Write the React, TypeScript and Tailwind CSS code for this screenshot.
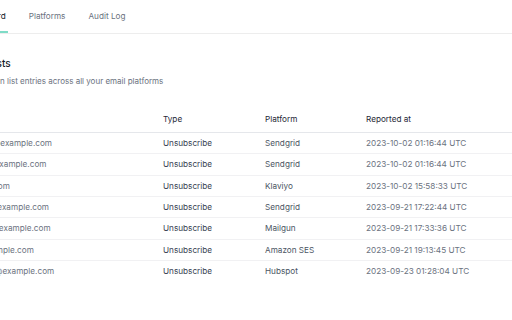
import React from "react";

const rows = [
  { email: "christopher.jordan@example.com", type: "Unsubscribe", platform: "Sendgrid", at: "2023-10-02 01:16:44 UTC" },
  { email: "jenniferr.williams@example.com", type: "Unsubscribe", platform: "Sendgrid", at: "2023-10-02 01:16:44 UTC" },
  { email: "marcio.lee@gmail.com", type: "Unsubscribe", platform: "Klaviyo", at: "2023-10-02 15:58:33 UTC" },
  { email: "daniel.j.robertson@example.com", type: "Unsubscribe", platform: "Sendgrid", at: "2023-09-21 17:22:44 UTC" },
  { email: "christopher.james@example.com", type: "Unsubscribe", platform: "Mailgun", at: "2023-09-21 17:33:36 UTC" },
  { email: "sara.johnston@example.com", type: "Unsubscribe", platform: "Amazon SES", at: "2023-09-21 19:13:45 UTC" },
  { email: "alexander.mitchellt@example.com", type: "Unsubscribe", platform: "Hubspot", at: "2023-09-23 01:28:04 UTC" },
];

export default function App() {
  return (
    <div className="w-[512px] h-[320px] overflow-hidden bg-white" style={{ fontFamily: "Inter, 'Noto Sans', sans-serif" }}>
      <div className="-ml-[80px] w-[592px]">
        <nav className="h-[34px] border-b border-[#ededed] flex items-stretch gap-[19px] pl-[41.5px] text-[8.2px] leading-none">
          <button className="px-[2px] pt-[2px] border-b-2 border-[#7fdcc7] text-[#111827] flex items-center">Dashboard</button>
          <button className="px-[2px] pt-[2px] border-b-2 border-transparent text-[#6b7280] flex items-center">Platforms</button>
          <button className="px-[2px] pt-[2px] border-b-2 border-transparent text-[#6b7280] flex items-center">Audit Log</button>
        </nav>
        <div className="pl-[6px]">
          <h1 className="mt-[22px] text-[10px] leading-[14px] font-medium text-[#111827]">Suppression Lists</h1>
          <p className="mt-[5px] ml-[31.7px] text-[8px] leading-[12px] text-[#6b7280]">Suppression list entries across all your email platforms</p>
          <div className="mt-[20px] -ml-[4px] text-[8.2px]">
            <div className="grid grid-cols-[241px_102px_101px_1fr] h-[26px] items-center border-b border-[#e5e7eb] text-[#1f2937]">
              <div>Email</div>
              <div>Type</div>
              <div>Platform</div>
              <div>Reported at</div>
            </div>
            {rows.map((r, i) => (
              <div
                key={i}
                className={`grid grid-cols-[241px_102px_101px_1fr] h-[21.33px] items-center ${i < rows.length - 1 ? "border-b border-[#f1f1f3]" : ""}`}
              >
                <div className="text-[#6b7280]">{r.email}</div>
                <div className="text-[#374151]">{r.type}</div>
                <div className="text-[#4b5563]">{r.platform}</div>
                <div className="text-[#6b7280] proportional-nums">{r.at}</div>
              </div>
            ))}
          </div>
        </div>
      </div>
    </div>
  );
}
